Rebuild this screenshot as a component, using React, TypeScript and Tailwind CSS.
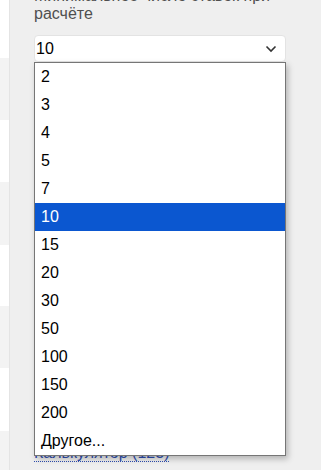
import { useState } from 'react';

const options = ['2', '3', '4', '5', '7', '10', '15', '20', '30', '50', '100', '150', '200', 'Другое...'];

export default function App() {
  const [value, setValue] = useState('10');

  return (
    <div
      className="flex h-[470px] w-[321px] overflow-hidden bg-[#efefef] text-black"
      style={{ fontFamily: '"Liberation Sans", Arial, sans-serif' }}
    >
      {/* left column stripes, rest of the table is scrolled out */}
      <div className="flex w-[10px] shrink-0 flex-col border-r border-[#e4e4e4]">
        <div className="h-[59px] bg-white" />
        <div className="h-[64px] bg-[#f3f3f3]" />
        <div className="h-[63px] bg-white" />
        <div className="h-[64px] bg-[#f3f3f3]" />
        <div className="h-[63px] bg-white" />
        <div className="h-[63px] bg-[#f3f3f3]" />
        <div className="h-[64px] bg-white" />
        <div className="h-[40px] bg-[#f3f3f3]" />
      </div>

      <div className="relative flex-1 pl-[24px]">
        <div className="-mt-[13px] w-[252px] text-[16px] leading-[18px] text-[#4f4f4f]">
          Минимальное число ставок при расчёте
        </div>

        <div className="mt-[12px] flex h-[27px] w-[252px] items-center justify-between rounded-[4px] border border-[#e3e3e3] bg-white pl-[1px] pr-[8px] text-[16px]">
          <span>{value}</span>
          <svg width="12" height="8" viewBox="0 0 12 8" fill="none">
            <path d="M1.5 1.5L6 6L10.5 1.5" stroke="#333" strokeWidth="1.6" />
          </svg>
        </div>

        <div className="mt-[382px] text-[16px] leading-[17px]">
          <span className="border-b border-dotted border-[#2f4fb3] text-[#2f4fb3]">Калькулятор (123)</span>
        </div>

        {/* open dropdown list */}
        <div className="absolute left-[24px] top-[62px] w-[252px] border border-[#767676] bg-white shadow-[2px_3px_6px_rgba(0,0,0,0.25)]">
          {options.map((o) => (
            <div
              key={o}
              onClick={() => setValue(o)}
              className={
                o === value
                  ? 'flex h-[28px] items-center bg-[#0b57d0] pl-[6px] text-[16px] text-white'
                  : 'flex h-[28px] items-center pl-[6px] text-[16px] text-black'
              }
            >
              {o}
            </div>
          ))}
        </div>
      </div>
    </div>
  );
}
